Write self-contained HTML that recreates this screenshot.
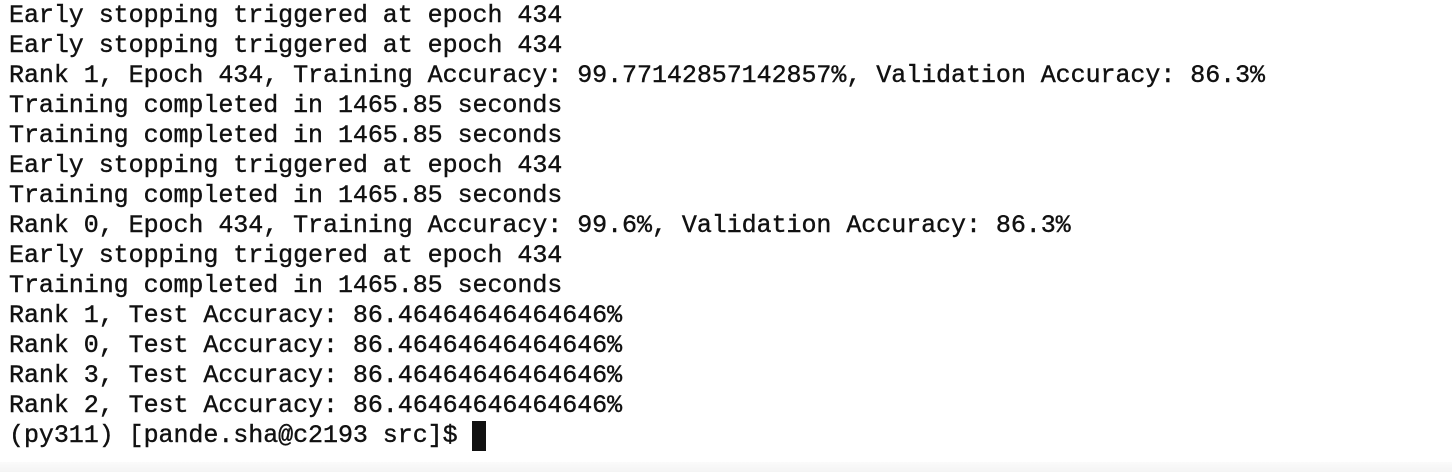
<!DOCTYPE html>
<html><head><style>
html,body{margin:0;padding:0;}
body{width:1452px;height:472px;background:#fff;position:relative;overflow:hidden;}
pre{margin:0;position:absolute;left:9px;top:1px;font-family:"Liberation Mono",monospace;font-size:25px;line-height:30px;letter-spacing:-0.05px;color:#111;-webkit-text-stroke:0.4px #111;}
.cur{display:inline-block;width:14px;height:30px;background:#111;vertical-align:top;margin-left:-1px;}
.strip{position:absolute;left:0;top:462px;width:1452px;height:10px;background:linear-gradient(#fbfbfb,#f4f4f4);}
</style></head><body>
<pre>Early stopping triggered at epoch 434
Early stopping triggered at epoch 434
Rank 1, Epoch 434, Training Accuracy: 99.77142857142857%, Validation Accuracy: 86.3%
Training completed in 1465.85 seconds
Training completed in 1465.85 seconds
Early stopping triggered at epoch 434
Training completed in 1465.85 seconds
Rank 0, Epoch 434, Training Accuracy: 99.6%, Validation Accuracy: 86.3%
Early stopping triggered at epoch 434
Training completed in 1465.85 seconds
Rank 1, Test Accuracy: 86.46464646464646%
Rank 0, Test Accuracy: 86.46464646464646%
Rank 3, Test Accuracy: 86.46464646464646%
Rank 2, Test Accuracy: 86.46464646464646%
(py311) [pande.sha@c2193 src]$ <span class="cur"></span></pre>
<div class="strip"></div>
</body></html>
